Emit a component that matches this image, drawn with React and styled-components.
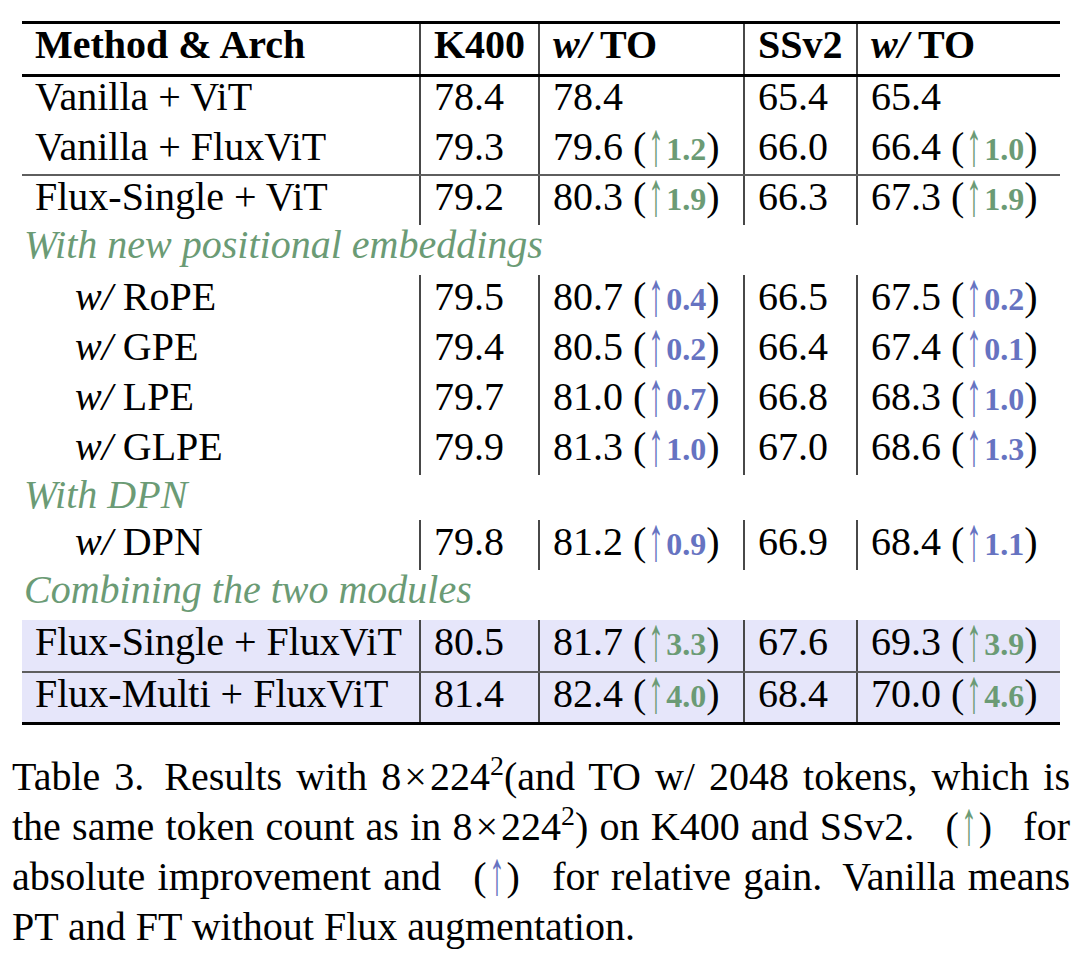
import React from "react";
import styled, { createGlobalStyle } from "styled-components";

const GREEN = "#6b9b75";
const BLUE = "#6673c1";

const GlobalStyle = createGlobalStyle`
  html, body { margin: 0; padding: 0; background: #ffffff; }
  body {
    font-family: "Liberation Serif", "Times New Roman", serif;
    color: #000;
  }
`;

const Page = styled.div`
  width: 1080px;
  height: 962px;
  box-sizing: border-box;
  padding: 21px 10px 0 12px;
  overflow: hidden;
`;

const Table = styled.div`
  width: 1038px;
  margin-left: 10px;
  border-top: 3px solid #000;
  border-bottom: 3px solid #000;
`;

const Row = styled.div`
  --pt: ${(p) => p.$pt ?? 1}px;
  display: grid;
  grid-template-columns: 397px 119px 205px 113px 204px;
  height: ${(p) => p.$h}px;
  background: ${(p) => (p.$hl ? "#e6e6fa" : "transparent")};
  border-bottom: ${(p) =>
    p.$rule === "thick"
      ? "3px solid #000"
      : p.$rule === "thin"
      ? "2px solid #5e5e5e"
      : "none"};
  font-weight: ${(p) => (p.$bold ? 700 : 400)};
`;

const Cell = styled.div`
  padding-top: var(--pt);
  padding-left: ${(p) => (p.$indent ? 53 : 13)}px;
  border-left: ${(p) => (p.$div ? "2px solid #484848" : "none")};
  font-size: 40px;
  line-height: 40px;
  white-space: nowrap;
`;

const SectionCell = styled.div`
  grid-column: 1 / -1;
  padding-top: var(--pt);
  padding-left: 2px;
  font-size: 40px;
  line-height: 40px;
  font-style: italic;
  color: ${GREEN};
  white-space: nowrap;
`;

const Em = styled.span`
  font-style: italic;
`;

const Arrow = styled.span`
  display: inline-block;
  color: ${(p) => p.$c};
  font-weight: 400;
  transform: scale(0.8, 1.55);
  transform-origin: 50% 62%;
`;

const GainNum = styled.span`
  color: ${(p) => p.$c};
  font-weight: 700;
  font-size: 32px;
`;

const Caption = styled.div`
  width: 1058px;
  margin-top: 27px;
  font-size: 40px;
  line-height: 50px;
`;

const CapLine = styled.div`
  white-space: nowrap;
  text-align: ${(p) => (p.$last ? "left" : "justify")};
  text-align-last: ${(p) => (p.$last ? "left" : "justify")};
`;

const Sup = styled.span`
  font-size: 28px;
  line-height: 0;
  vertical-align: 15px;
`;

const Times = styled.span`
  margin: 0 3px;
`;

function Val({ v, g, c }) {
  if (!g) return <>{v}</>;
  return (
    <>
      {v} (<Arrow $c={c}>↑</Arrow>
      <GainNum $c={c}>{g}</GainNum>)
    </>
  );
}

const W = ({ children }) => (
  <>
    <Em>w/</Em> {children}
  </>
);

const G = GREEN;
const B = BLUE;

const body = [
  { type: "row", h: 48, pt: 0, label: "Vanilla + ViT", k: "78.4", kt: ["78.4"], s: "65.4", st: ["65.4"] },
  { type: "row", h: 49, pt: 2, rule: "thin", label: "Vanilla + FluxViT", k: "79.3", kt: ["79.6", "1.2", G], s: "66.0", st: ["66.4", "1.0", G] },
  { type: "row", h: 49, pt: 1, label: "Flux-Single + ViT", k: "79.2", kt: ["80.3", "1.9", G], s: "66.3", st: ["67.3", "1.9", G] },
  { type: "section", h: 50, pt: 0, label: "With new positional embeddings" },
  { type: "row", h: 50, pt: 2, indent: true, label: <W>RoPE</W>, k: "79.5", kt: ["80.7", "0.4", B], s: "66.5", st: ["67.5", "0.2", B] },
  { type: "row", h: 50, pt: 2, indent: true, label: <W>GPE</W>, k: "79.4", kt: ["80.5", "0.2", B], s: "66.4", st: ["67.4", "0.1", B] },
  { type: "row", h: 50, pt: 2, indent: true, label: <W>LPE</W>, k: "79.7", kt: ["81.0", "0.7", B], s: "66.8", st: ["68.3", "1.0", B] },
  { type: "row", h: 50, pt: 2, indent: true, label: <W>GLPE</W>, k: "79.9", kt: ["81.3", "1.0", B], s: "67.0", st: ["68.6", "1.3", B] },
  { type: "section", h: 45, pt: 0, label: "With DPN" },
  { type: "row", h: 50, pt: 2, indent: true, label: <W>DPN</W>, k: "79.8", kt: ["81.2", "0.9", B], s: "66.9", st: ["68.4", "1.1", B] },
  { type: "section", h: 50, pt: 0, label: "Combining the two modules" },
  { type: "row", h: 51, pt: 2, hl: true, rule: "thin", label: "Flux-Single + FluxViT", k: "80.5", kt: ["81.7", "3.3", G], s: "67.6", st: ["69.3", "3.9", G] },
  { type: "row", h: 49, pt: 1, hl: true, label: "Flux-Multi + FluxViT", k: "81.4", kt: ["82.4", "4.0", G], s: "68.4", st: ["70.0", "4.6", G] },
];

export default function App() {
  return (
    <>
      <GlobalStyle />
      <Page>
        <Table>
          <Row $h={50} $pt={1} $rule="thick" $bold>
            <Cell>Method &amp; Arch</Cell>
            <Cell $div>K400</Cell>
            <Cell $div>
              <Em>w/</Em> TO
            </Cell>
            <Cell $div>SSv2</Cell>
            <Cell $div>
              <Em>w/</Em> TO
            </Cell>
          </Row>
          {body.map((r, i) =>
            r.type === "section" ? (
              <Row key={i} $h={r.h} $pt={r.pt}>
                <SectionCell>{r.label}</SectionCell>
              </Row>
            ) : (
              <Row key={i} $h={r.h} $pt={r.pt} $hl={r.hl} $rule={r.rule}>
                <Cell $indent={r.indent}>{r.label}</Cell>
                <Cell $div>{r.k}</Cell>
                <Cell $div>
                  <Val v={r.kt[0]} g={r.kt[1]} c={r.kt[2]} />
                </Cell>
                <Cell $div>{r.s}</Cell>
                <Cell $div>
                  <Val v={r.st[0]} g={r.st[1]} c={r.st[2]} />
                </Cell>
              </Row>
            )
          )}
        </Table>
        <Caption>
          <CapLine>
            Table 3.{"\u2002"}Results with 8<Times>×</Times>224<Sup>2</Sup>(and TO w/ 2048 tokens, which is
          </CapLine>
          <CapLine>
            the same token count as in 8<Times>×</Times>224<Sup>2</Sup>) on K400 and SSv2.{"\u2002"} (
            <Arrow $c={GREEN}>↑</Arrow>){"\u2002"} for
          </CapLine>
          <CapLine>
            absolute improvement and{"\u2002"} (<Arrow $c={BLUE}>↑</Arrow>){"\u2002"} for relative gain.{"\u2002"}Vanilla means
          </CapLine>
          <CapLine $last>PT and FT without Flux augmentation.</CapLine>
        </Caption>
      </Page>
    </>
  );
}
